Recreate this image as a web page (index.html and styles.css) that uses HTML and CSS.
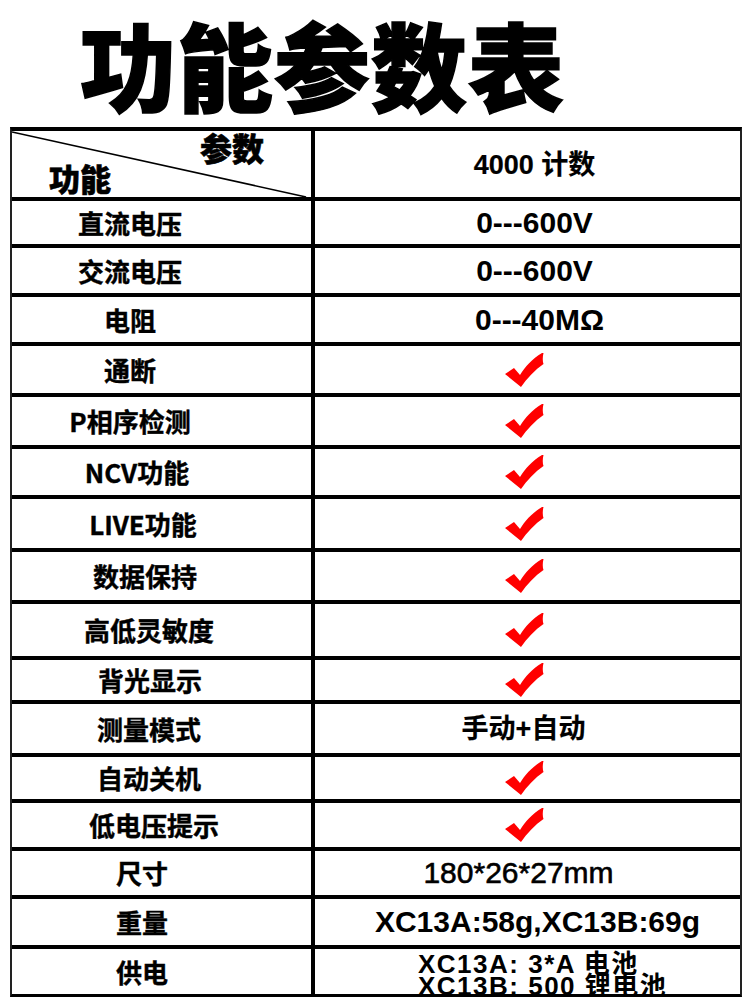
FILE: index.html
```html
<!DOCTYPE html>
<html lang="zh">
<head>
<meta charset="utf-8">
<title>功能参数表</title>
<link rel="stylesheet" href="styles.css">
</head>
<body>
<h1 class="title">功能参数表</h1>
<div class="sheet">
  <div class="row head">
    <div class="cell left hd">
      <svg class="diag" viewBox="0 0 303 66" preserveAspectRatio="none"><line x1="0" y1="1" x2="298" y2="65" stroke="#000" stroke-width="1.6"/></svg>
      <span class="hd-top">参数</span>
      <span class="hd-bottom">功能</span>
    </div>
    <div class="cell right val sm shift-r">4000 计数</div>
  </div>
  <div class="row h43"><div class="cell left name p63">直流电压</div><div class="cell right val shift-r">0---600V</div></div>
  <div class="row h45"><div class="cell left name p63">交流电压</div><div class="cell right val shift-r">0---600V</div></div>
  <div class="row h45"><div class="cell left name p63">电阻</div><div class="cell right val shift-r2">0---40MΩ</div></div>
  <div class="row h47"><div class="cell left name p63">通断</div><div class="cell right"><svg class="check" viewBox="0 0 40 34"><path d="M0,21 L9,15 L15,22 C20,14 27,6 37,0 L38.5,0 C37.5,4 37.5,8 38.5,11 C30,17 22,25 16,34 Z" fill="#f00"/></svg></div></div>
  <div class="row h48"><div class="cell left name p63">P相序检测</div><div class="cell right"><svg class="check" viewBox="0 0 40 34"><path d="M0,21 L9,15 L15,22 C20,14 27,6 37,0 L38.5,0 C37.5,4 37.5,8 38.5,11 C30,17 22,25 16,34 Z" fill="#f00"/></svg></div></div>
  <div class="row h46"><div class="cell left name p49">NCV功能</div><div class="cell right"><svg class="check" viewBox="0 0 40 34"><path d="M0,21 L9,15 L15,22 C20,14 27,6 37,0 L38.5,0 C37.5,4 37.5,8 38.5,11 C30,17 22,25 16,34 Z" fill="#f00"/></svg></div></div>
  <div class="row h49"><div class="cell left name p37">LIVE功能</div><div class="cell right"><svg class="check" viewBox="0 0 40 34"><path d="M0,21 L9,15 L15,22 C20,14 27,6 37,0 L38.5,0 C37.5,4 37.5,8 38.5,11 C30,17 22,25 16,34 Z" fill="#f00"/></svg></div></div>
  <div class="row h48"><div class="cell left name p33">数据保持</div><div class="cell right"><svg class="check" viewBox="0 0 40 34"><path d="M0,21 L9,15 L15,22 C20,14 27,6 37,0 L38.5,0 C37.5,4 37.5,8 38.5,11 C30,17 22,25 16,34 Z" fill="#f00"/></svg></div></div>
  <div class="row h52"><div class="cell left name p25">高低灵敏度</div><div class="cell right"><svg class="check" viewBox="0 0 40 34"><path d="M0,21 L9,15 L15,22 C20,14 27,6 37,0 L38.5,0 C37.5,4 37.5,8 38.5,11 C30,17 22,25 16,34 Z" fill="#f00"/></svg></div></div>
  <div class="row h40"><div class="cell left name p23">背光显示</div><div class="cell right"><svg class="check" viewBox="0 0 40 34"><path d="M0,21 L9,15 L15,22 C20,14 27,6 37,0 L38.5,0 C37.5,4 37.5,8 38.5,11 C30,17 22,25 16,34 Z" fill="#f00"/></svg></div></div>
  <div class="row h49"><div class="cell left name p25">测量模式</div><div class="cell right val sm shift-l">手动+自动</div></div>
  <div class="row h42"><div class="cell left name p25">自动关机</div><div class="cell right"><svg class="check" viewBox="0 0 40 34"><path d="M0,21 L9,15 L15,22 C20,14 27,6 37,0 L38.5,0 C37.5,4 37.5,8 38.5,11 C30,17 22,25 16,34 Z" fill="#f00"/></svg></div></div>
  <div class="row h44"><div class="cell left name p15">低电压提示</div><div class="cell right"><svg class="check" viewBox="0 0 40 34"><path d="M0,21 L9,15 L15,22 C20,14 27,6 37,0 L38.5,0 C37.5,4 37.5,8 38.5,11 C30,17 22,25 16,34 Z" fill="#f00"/></svg></div></div>
  <div class="row h44"><div class="cell left name p39">尺寸</div><div class="cell right val reg shift-l2">180*26*27mm</div></div>
  <div class="row h46"><div class="cell left name p39">重量</div><div class="cell right val shift-r3">XC13A:58g,XC13B:69g</div></div>
  <div class="row h45"><div class="cell left name p39">供电</div><div class="cell right supply"><span>XC13A: 3*A 电池</span><span>XC13B: 500 锂电池</span></div></div>
</div>
</body>
</html>
```
FILE: styles.css
```css
html, body {
  margin: 0;
  padding: 0;
  background: #fff;
}
body {
  width: 750px;
  height: 1000px;
  overflow: hidden;
  font-family: "Liberation Sans", "Noto Sans CJK SC", sans-serif;
  color: #000;
}
.title {
  margin: 0;
  box-sizing: border-box;
  height: 127px;
  padding: 13px 0 0 80px;
  font-family: "Noto Sans CJK SC", sans-serif;
  font-size: 96px;
  line-height: 100px;
  font-weight: 900;
  letter-spacing: 1px;
  white-space: nowrap;
  -webkit-text-stroke: 1.5px #000;
}
.sheet {
  margin-left: 10px;
  width: 732px;
  box-sizing: border-box;
  border-left: 2px solid #222;
  border-right: 2px solid #222;
  border-top: 4px solid #000;
  border-bottom: 3px solid #000;
}
.row {
  display: grid;
  grid-template-columns: 303px 1fr;
  border-top: 4px solid #000;
}
.row.head {
  border-top: none;
  height: 66px;
}
.h40 { height: 40px; }
.h42 { height: 42px; }
.h43 { height: 43px; }
.h44 { height: 44px; }
.h45 { height: 45px; }
.h46 { height: 46px; }
.h47 { height: 47px; }
.h48 { height: 48px; }
.h49 { height: 49px; }
.h52 { height: 52px; }
.cell {
  display: flex;
  align-items: center;
  justify-content: center;
  overflow: hidden;
}
.left {
  border-right: 4px solid #000;
}
.name {
  font-family: "Noto Sans CJK SC", sans-serif;
  font-weight: 700;
  font-size: 26px;
  line-height: 30px;
  -webkit-text-stroke: 0.4px #000;
}
.p63 { padding-right: 63px; }
.p49 { padding-right: 49px; }
.p39 { padding-right: 39px; }
.p37 { padding-right: 37px; }
.p33 { padding-right: 33px; }
.p25 { padding-right: 25px; }
.p23 { padding-right: 23px; }
.p15 { padding-right: 15px; }
.hd {
  position: relative;
  flex-direction: column;
  align-items: flex-start;
  justify-content: space-between;
  padding-bottom: 5px;
  box-sizing: border-box;
  overflow: visible;
}
.diag {
  position: absolute;
  left: 0;
  top: 0;
  width: 100%;
  height: 100%;
}
.hd-top {
  position: relative;
  font-family: "Noto Sans CJK SC", sans-serif;
  font-weight: 900;
  font-size: 32px;
  line-height: 32px;
  margin-left: 188px;
  -webkit-text-stroke: 0.6px #000;
}
.hd-bottom {
  position: relative;
  font-family: "Noto Sans CJK SC", sans-serif;
  font-weight: 900;
  font-size: 31px;
  line-height: 30px;
  margin-left: 37px;
  -webkit-text-stroke: 0.6px #000;
}
.val {
  font-weight: 700;
  font-size: 30px;
  line-height: 32px;
}
.val.sm {
  font-size: 27px;
  -webkit-text-stroke: 0.2px #000;
}
.val.reg {
  font-weight: 400;
  -webkit-text-stroke: 0.6px #000;
}
.shift-r { padding-left: 14px; }
.shift-r2 { padding-left: 24px; }
.shift-r3 { padding-left: 20px; }
.shift-l { padding-right: 8px; }
.shift-l2 { padding-right: 18px; }
.check {
  width: 40px;
  height: 34px;
  margin-right: 6px;
}
.supply {
  flex-direction: column;
  align-items: flex-start;
  justify-content: flex-start;
  padding: 4px 0 0 103px;
  font-weight: 700;
  font-size: 26px;
  line-height: 22px;
  letter-spacing: 1.5px;
}
.supply span {
  display: block;
  white-space: nowrap;
}
```
